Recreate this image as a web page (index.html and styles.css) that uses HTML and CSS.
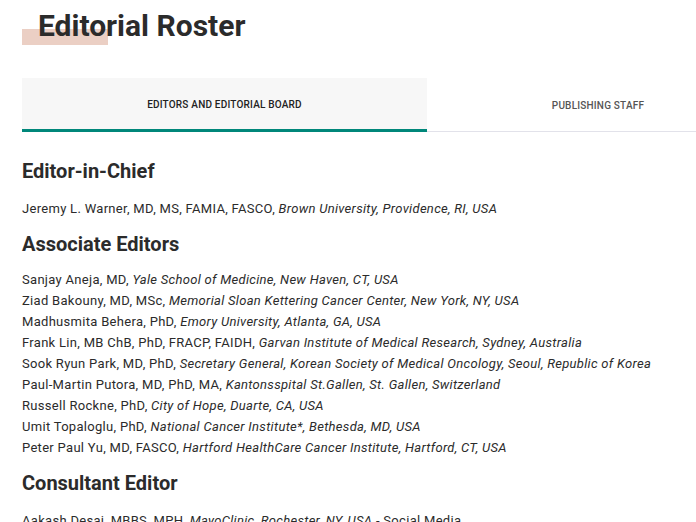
FILE: index.html
```html
<!DOCTYPE html>
<html lang="en">
<head>
    <meta charset="UTF-8">
    <meta name="viewport" content="width=device-width, initial-scale=1.0">
    <title>Editorial Roster</title>
    <link rel="stylesheet" href="styles.css">
</head>
<body>
    <div class="page">
        <h1 class="page-title">Editorial Roster</h1>

        <!-- Tabs -->
        <div class="tabs">
            <div class="tab active">Editors and Editorial Board</div>
            <div class="tab">Publishing Staff</div>
        </div>

        <h2>Editor-in-Chief</h2>
        <p class="person">Jeremy L. Warner, MD, MS, FAMIA, FASCO, <em>Brown University, Providence, RI, USA</em></p>

        <h2>Associate Editors</h2>
        <ul class="roster">
            <li>Sanjay Aneja, MD, <em>Yale School of Medicine, New Haven, CT, USA</em></li>
            <li>Ziad Bakouny, MD, MSc, <em>Memorial Sloan Kettering Cancer Center, New York, NY, USA</em></li>
            <li>Madhusmita Behera, PhD, <em>Emory University, Atlanta, GA, USA</em></li>
            <li>Frank Lin, MB ChB, PhD, FRACP, FAIDH, <em>Garvan Institute of Medical Research, Sydney, Australia</em></li>
            <li>Sook Ryun Park, MD, PhD, <em>Secretary General, Korean Society of Medical Oncology, Seoul, Republic of Korea</em></li>
            <li>Paul-Martin Putora, MD, PhD, MA, <em>Kantonsspital St.Gallen, St. Gallen, Switzerland</em></li>
            <li>Russell Rockne, PhD, <em>City of Hope, Duarte, CA, USA</em></li>
            <li>Umit Topaloglu, PhD, <em>National Cancer Institute*, Bethesda, MD, USA</em></li>
            <li>Peter Paul Yu, MD, FASCO, <em>Hartford HealthCare Cancer Institute, Hartford, CT, USA</em></li>
        </ul>

        <h2>Consultant Editor</h2>
        <p class="person">Aakash Desai, MBBS, MPH, <em>MayoClinic, Rochester, NY, USA</em> - Social Media</p>
    </div>
</body>
</html>
```

FILE: styles.css
```css
body {
    font-family: Roboto, "Liberation Sans", sans-serif;
    color: #2b2b2b;
    background: #fff;
    margin: 0;
    overflow: hidden;
}

.page {
    padding: 0 0 0 22px;
}

.page-title {
    position: relative;
    display: inline-block;
    margin: 0;
    padding: 7px 0 0 16px;
    font-size: 30px;
    font-weight: 700;
    line-height: 37px;
    color: #2b2b2b;
}

/* pink marker behind the title */
.page-title::before {
    content: "";
    position: absolute;
    left: 0;
    top: 29px;
    width: 86px;
    height: 16px;
    background: #ebcfc4;
    z-index: -1;
}

.tabs {
    display: flex;
    margin-top: 34px;
    margin-bottom: 25px;
}

.tab {
    flex: 0 0 342px;
    height: 51px;
    display: flex;
    align-items: center;
    justify-content: center;
    font-size: 10px;
    font-weight: 500;
    letter-spacing: 0.2px;
    text-transform: uppercase;
    color: #555;
    border-bottom: 1px solid #e2e2ea;
    padding-top: 2px;
}

.tab.active {
    flex-basis: 405px;
    background: #f7f7f7;
    color: #222;
    border-bottom: 3px solid #00877a;
    height: 49px;
}

h2 {
    margin: 0;
    font-size: 20px;
    font-weight: 700;
    line-height: 28px;
    color: #2b2b2b;
}

.person {
    margin: 13px 0 11px;
    font-size: 13px;
    line-height: 21px;
    letter-spacing: 0.3px;
}

.roster {
    list-style: none;
    margin: 11px 0 11px;
    padding: 0;
    font-size: 13px;
    line-height: 21px;
    letter-spacing: 0.3px;
}
```
